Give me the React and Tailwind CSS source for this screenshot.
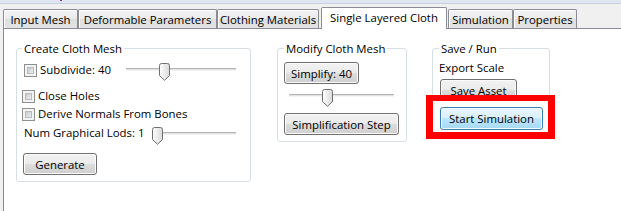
import React from "react";

const font = { fontFamily: '"Open Sans", "Noto Sans", sans-serif' };

function Thumb() {
  return (
    <svg width="11" height="18" viewBox="0 0 11 18" className="block">
      <defs>
        <linearGradient id="tg" x1="0" y1="0" x2="1" y2="0">
          <stop offset="0" stopColor="#ffffff" />
          <stop offset="1" stopColor="#d9d9d9" />
        </linearGradient>
      </defs>
      <path
        d="M0.5 2.5 Q0.5 0.5 2.5 0.5 H8.5 Q10.5 0.5 10.5 2.5 V12.5 L5.5 17.3 L0.5 12.5 Z"
        fill="url(#tg)"
        stroke="#707070"
        strokeWidth="1"
      />
    </svg>
  );
}

function Slider({ width, thumb, className = "" }) {
  return (
    <div className={"relative h-[18px] shrink-0 " + className} style={{ width }}>
      <div className="pt-[5px]">
        <div className="h-[3px] border-t border-[#b4b4b4] bg-[#e2e2e2] border-b border-b-[#f4f4f4]" />
      </div>
      <div className="absolute top-0" style={{ left: thumb }}>
        <Thumb />
      </div>
    </div>
  );
}

function Check({ className = "" }) {
  return (
    <div className={"w-[13px] h-[13px] border border-[#8e8f8f] bg-[#f4f4f4] p-[2px] shrink-0 " + className}>
      <div className="w-full h-full border border-[#b9bcbf] bg-[linear-gradient(135deg,#c6c9ce,#eef0f2)]" />
    </div>
  );
}

function Btn({ children, w, h = 22, className = "" }) {
  return (
    <div
      className={
        "flex items-center justify-center whitespace-nowrap rounded-[3px] border border-[#707070] bg-[linear-gradient(to_bottom,#f2f2f2_0%,#ebebeb_50%,#dddddd_50%,#cfcfcf_100%)] shadow-[inset_0_0_0_1px_#fbfbfb] leading-[15px] " +
        className
      }
      style={{ width: w, height: h }}
    >
      {children}
    </div>
  );
}

function Tab({ children, w, active = false, className = "" }) {
  if (active) {
    return (
      <div
        className={
          "relative z-10 mb-[-1px] h-[22px] flex items-center justify-center whitespace-nowrap bg-white border-l border-t border-r border-[#898c95] rounded-t-[2px] pb-[2px] " +
          className
        }
        style={{ width: w }}
      >
        {children}
      </div>
    );
  }
  return (
    <div
      className={
        "h-[19px] flex items-center justify-center whitespace-nowrap pt-[1px] border-l border-t border-r border-[#898c95] rounded-t-[2px] bg-[linear-gradient(to_bottom,#f3f3f3_0%,#ebebeb_50%,#dedede_51%,#e4e4e4_100%)] shadow-[inset_1px_1px_0_#ffffff] " +
        className
      }
      style={{ width: w }}
    >
      {children}
    </div>
  );
}

export default function App() {
  return (
    <div
      className="relative w-[621px] h-[211px] overflow-hidden bg-[#f0f0f0] text-[11.4px] text-black flex flex-col"
      style={font}
    >
      <div className="h-[4px] shrink-0 bg-[#dfe6f2] border-b border-[#c8d1e0] flex">
        <div className="ml-[60px] w-[2px] h-[1px] bg-[#8a2a8a]" />
      </div>
      <div className="h-[24px] shrink-0 flex items-end pl-[3px] leading-[15px]">
        <Tab w={75}>Input Mesh</Tab>
        <Tab w={139}>Deformable Parameters</Tab>
        <Tab w={102}>Clothing Materials</Tab>
        <Tab w={126} active className="ml-[2px]">
          Single Layered Cloth
        </Tab>
        <Tab w={65} className="ml-[1px]">Simulation</Tab>
        <Tab w={64}>Properties</Tab>
      </div>
      <div className="flex-1 ml-[3px] w-[660px] border-l border-t border-[#898c95] bg-white">
        <div className="flex items-start mt-[12px] ml-[12px]">
          {/* Create Cloth Mesh */}
          <fieldset className="w-[235px] border border-[#d5dfe5] rounded-[3px] pl-[5px] pb-[6px]">
            <legend className="px-[2px] leading-[15px]">Create Cloth Mesh</legend>
            <div className="flex items-start h-[18px] mt-[6px] ml-[2px]">
              <Check className="mt-[2px]" />
              <span className="ml-[3px] mt-[1px] w-[86px] leading-[14px] whitespace-nowrap">Subdivide: 40</span>
              <Slider width={110} thumb={33} className="mt-[1px]" />
            </div>
            <div className="flex items-center h-[14px] mt-[9px]">
              <Check />
              <span className="ml-[3px] leading-[14px] whitespace-nowrap">Close Holes</span>
            </div>
            <div className="flex items-center h-[14px] mt-[4px]">
              <Check />
              <span className="ml-[3px] leading-[14px] whitespace-nowrap">Derive Normals From Bones</span>
            </div>
            <div className="flex items-start h-[18px] mt-[5px] ml-[2px]">
              <span className="w-[128px] shrink-0 leading-[14px] whitespace-nowrap">Num Graphical Lods: 1</span>
              <Slider width={84} thumb={0} className="mt-[1px]" />
            </div>
            <Btn w={74} className="mt-[9px] ml-[1px]">
              Generate
            </Btn>
          </fieldset>

          {/* Modify Cloth Mesh */}
          <fieldset className="ml-[26px] w-[130px] border border-[#d5dfe5] rounded-[3px] pl-[6px] pb-[6px]">
            <legend className="px-[2px] leading-[15px] whitespace-nowrap">Modify Cloth Mesh</legend>
            <Btn w={75} className="mt-[6px]">
              Simplify: 40
            </Btn>
            <Slider width={105} thumb={33} className="mt-[5px] ml-[5px]" />
            <Btn w={115} className="mt-[6px]">
              Simplification Step
            </Btn>
          </fieldset>

          {/* Save / Run */}
          <fieldset className="ml-[25px] w-[118px] border border-[#d5dfe5] rounded-[3px] pl-[6px] pb-[5px]">
            <legend className="px-[2px] leading-[15px] whitespace-nowrap">Save / Run</legend>
            <div className="mt-[4px] leading-[15px] whitespace-nowrap">Export Scale</div>
            <Btn w={77} className="mt-[4px] ml-[1px]">
              Save Asset
            </Btn>
            <div
              className="mt-[6px] ml-[1px] w-[103px] h-[23px] flex items-center justify-center whitespace-nowrap rounded-[3px] border border-[#3c7fb1] bg-[linear-gradient(to_bottom,#eaf6fd_0%,#d9f0fc_50%,#bee6fd_50%,#a7d9f5_100%)] shadow-[inset_0_0_0_1px_#f4fbfe] leading-[15px]"
            >
              Start Simulation
            </div>
          </fieldset>
        </div>
      </div>

      {/* red highlight annotation */}
      <div className="absolute left-[426px] top-[95px] w-[129px] h-[44px] border-[7px] border-t-[6px] border-[#ff0000] pointer-events-none" />
    </div>
  );
}
